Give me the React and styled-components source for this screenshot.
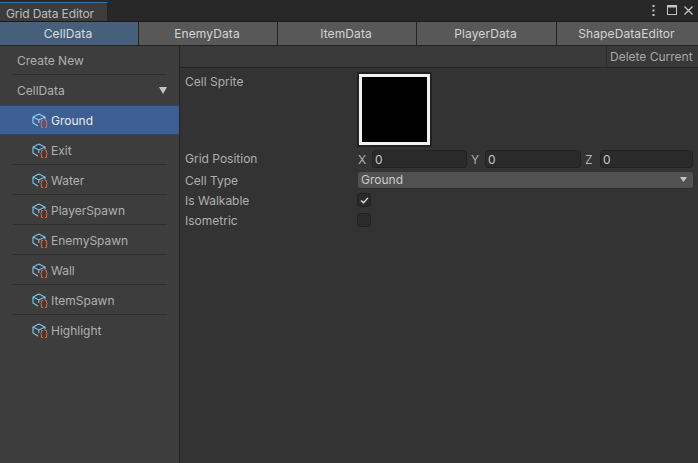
import React from "react";
import styled, { createGlobalStyle } from "styled-components";

const GlobalStyle = createGlobalStyle`
  html, body {
    margin: 0;
    padding: 0;
    background: #333333;
  }
  * {
    box-sizing: border-box;
  }
`;

const Window = styled.div`
  width: 698px;
  height: 463px;
  display: flex;
  flex-direction: column;
  overflow: hidden;
  background: #333333;
  font-family: Inter, "Noto Sans", sans-serif;
  font-size: 12px;
  color: #bcbcbc;
`;

const TitleBar = styled.div`
  height: 22px;
  flex: none;
  display: flex;
  justify-content: space-between;
  background: #282828;
  border-bottom: 1px solid #1a1a1a;
`;

const WindowTab = styled.div`
  width: 108px;
  margin-top: 2px;
  padding: 3px 0 0 6px;
  background: #3c3c3c;
  border-top: 1px solid #3a72a8;
  border-right: 1px solid #232323;
  line-height: 16px;
  letter-spacing: -0.12px;
  color: #bcbcbc;
`;

const WindowButtons = styled.div`
  display: flex;
  align-items: center;
  padding: 0 5px 1px 0;
`;

const MenuDots = styled.svg`
  display: block;
  margin-right: 12px;
`;

const MaximizeIcon = styled.svg`
  display: block;
  margin-right: 7px;
`;

const CloseIcon = styled.svg`
  display: block;
`;

const TabBar = styled.div`
  height: 24px;
  flex: none;
  display: grid;
  grid-template-columns: 138px 138px 138px 139px 1fr;
  column-gap: 1px;
  background: #232323;
  border-bottom: 1px solid #232323;
`;

const Tab = styled.div`
  display: flex;
  align-items: center;
  justify-content: center;
  padding-right: 2px;
  letter-spacing: 0.1px;
  background: ${(p) => (p.$active ? "#46607c" : "#585858")};
  color: ${(p) => (p.$active ? "#dcdcdc" : "#d4d4d4")};
`;

const Body = styled.div`
  flex: 1;
  display: flex;
  min-height: 0;
`;

const Sidebar = styled.div`
  width: 180px;
  flex: none;
  background: #3d3d3d;
  border-right: 1px solid #242424;
`;

const CreateRow = styled.div`
  height: 29px;
  margin: 0 13px;
  padding-left: 4px;
  display: flex;
  align-items: center;
  color: #b0b0b0;
  border-bottom: 1px solid #2e2e2e;
`;

const GroupRow = styled.div`
  height: 30px;
  padding: 0 12px 0 17px;
  display: flex;
  align-items: center;
  justify-content: space-between;
  color: #b0b0b0;
`;

const separator = `
  linear-gradient(#2e2e2e, #2e2e2e) 13px 100% / 154px 1px no-repeat
`;

const ItemRow = styled.div`
  height: 30px;
  padding-left: 32px;
  display: flex;
  align-items: center;
  gap: 2px;
  background: ${(p) => (p.$divided ? separator : "transparent")};
  color: #b0b0b0;

  ${(p) =>
    p.$selected &&
    `
    background: #3d5f94;
    color: #ececec;
    border-top: 1px solid #2f4668;
    border-bottom: 1px solid #2f4668;
  `}
`;

const Content = styled.div`
  flex: 1;
  min-width: 0;
`;

const Toolbar = styled.div`
  height: 22px;
  display: flex;
  justify-content: flex-end;
  background: #393939;
  border-bottom: 1px solid #242424;
`;

const ToolButton = styled.div`
  width: 92px;
  display: flex;
  align-items: center;
  padding-left: 3px;
  color: #a8a8a8;
  border-left: 1px solid #2c2c2c;
`;

const Fields = styled.div`
  padding: 6px 5px 0 5px;
`;

const Field = styled.div`
  display: grid;
  grid-template-columns: 173px 1fr;
  align-items: ${(p) => (p.$top ? "start" : "center")};
  height: ${(p) => p.$height}px;
`;

const Label = styled.div`
  color: #b0b0b0;
  line-height: 16px;
  padding-top: ${(p) => (p.$low ? "2px" : "0")};
`;

const SpriteFrame = styled.div`
  width: 71px;
  height: 71px;
  margin-left: 1px;
  background: #000;
  border: 3px solid #f2f2f2;
  box-shadow: 0 0 0 2px #222222;
`;

const VectorRow = styled.div`
  display: grid;
  grid-template-columns: 113px 114px 1fr;
  height: 18px;
`;

const Axis = styled.label`
  display: flex;
  align-items: center;
  padding-right: ${(p) => (p.$last ? "0" : "4px")};
  color: #b0b0b0;
`;

const AxisLetter = styled.span`
  flex: none;
  width: ${(p) => (p.$last ? "15px" : "14px")};
`;

const NumberBox = styled.div`
  flex: 1;
  height: 18px;
  padding: 0 2px;
  display: flex;
  align-items: center;
  background: #2a2a2a;
  border: 1px solid #212121;
  border-radius: 3px;
  color: #c8c8c8;
`;

const Select = styled.div`
  height: 17px;
  padding: 0 6px 0 3px;
  display: flex;
  align-items: center;
  justify-content: space-between;
  background: #515151;
  border-radius: 3px;
  border-bottom: 1px solid #2b2b2b;
  color: #cccccc;
`;

const Checkbox = styled.div`
  width: 14px;
  height: 14px;
  margin-left: -1px;
  display: flex;
  align-items: center;
  justify-content: center;
  background: #2a2a2a;
  border: 1px solid #212121;
  border-radius: 3px;
`;

const Caret = ({ width, height }) => (
  <svg width={width} height={height} viewBox="0 0 10 8" preserveAspectRatio="none">
    <path d="M0 0H10L5 8Z" fill="#c4c4c4" />
  </svg>
);

const ScriptIcon = ({ selected }) => (
  <svg width="17" height="18" viewBox="0 0 17 18" fill="none">
    <path
      d="M6.8 3 13 6V8.5M6.8 3 1 6V12L6 15M1 6 6.8 9 13 6M6.8 9V12"
      stroke={selected ? "#92d6f6" : "#7cc6ee"}
      strokeWidth="1.1"
    />
    <path
      d="M11 9.5H9.5V12L8.5 12.8 9.5 13.5V16.5H11M13 9.5H14.5V12L15.5 12.8 14.5 13.5V16.5H13"
      stroke="#ff5a30"
      strokeWidth="1"
    />
  </svg>
);

const items = [
  "Ground",
  "Exit",
  "Water",
  "PlayerSpawn",
  "EnemySpawn",
  "Wall",
  "ItemSpawn",
  "Highlight",
];

const tabs = ["CellData", "EnemyData", "ItemData", "PlayerData", "ShapeDataEditor"];

export default function App() {
  return (
    <Window>
      <GlobalStyle />
      <TitleBar>
        <WindowTab>Grid Data Editor</WindowTab>
        <WindowButtons>
          <MenuDots width="3" height="11" viewBox="0 0 3 11" fill="#c4c4c4">
            <rect x="0.5" y="0" width="2" height="2" />
            <rect x="0.5" y="4.5" width="2" height="2" />
            <rect x="0.5" y="9" width="2" height="2" />
          </MenuDots>
          <MaximizeIcon width="10" height="10" viewBox="0 0 10 10" fill="none" stroke="#c4c4c4">
            <rect x="0.5" y="0.5" width="9" height="9" />
            <path d="M0 1.5H10" strokeWidth="2" />
          </MaximizeIcon>
          <CloseIcon width="9" height="9" viewBox="0 0 9 9" fill="none" stroke="#c4c4c4" strokeWidth="1.3">
            <path d="M0.5 0.5 8.5 8.5M8.5 0.5 0.5 8.5" />
          </CloseIcon>
        </WindowButtons>
      </TitleBar>
      <TabBar>
        {tabs.map((tab, i) => (
          <Tab key={tab} $active={i === 0}>
            {tab}
          </Tab>
        ))}
      </TabBar>
      <Body>
        <Sidebar>
          <CreateRow>Create New</CreateRow>
          <GroupRow>
            CellData
            <Caret width={8} height={7} />
          </GroupRow>
          {items.map((item, i) => (
            <ItemRow key={item} $selected={i === 0} $divided={i > 0 && i < items.length - 1}>
              <ScriptIcon selected={i === 0} />
              {item}
            </ItemRow>
          ))}
        </Sidebar>
        <Content>
          <Toolbar>
            <ToolButton>Delete Current</ToolButton>
          </Toolbar>
          <Fields>
            <Field $top $height={74}>
              <Label>Cell Sprite</Label>
              <SpriteFrame />
            </Field>
            <Field $height={22}>
              <Label>Grid Position</Label>
              <VectorRow>
                <Axis>
                  <AxisLetter>X</AxisLetter>
                  <NumberBox>0</NumberBox>
                </Axis>
                <Axis>
                  <AxisLetter>Y</AxisLetter>
                  <NumberBox>0</NumberBox>
                </Axis>
                <Axis $last>
                  <AxisLetter $last>Z</AxisLetter>
                  <NumberBox>0</NumberBox>
                </Axis>
              </VectorRow>
            </Field>
            <Field $height={20}>
              <Label $low>Cell Type</Label>
              <Select>
                Ground
                <Caret width={7} height={5} />
              </Select>
            </Field>
            <Field $height={20}>
              <Label $low>Is Walkable</Label>
              <Checkbox>
                <svg width="9" height="7" viewBox="0 0 10 8" fill="none" stroke="#e4e4e4" strokeWidth="1.5">
                  <path d="M1 4 3.8 6.6 9 1" />
                </svg>
              </Checkbox>
            </Field>
            <Field $height={20}>
              <Label $low>Isometric</Label>
              <Checkbox />
            </Field>
          </Fields>
        </Content>
      </Body>
    </Window>
  );
}
